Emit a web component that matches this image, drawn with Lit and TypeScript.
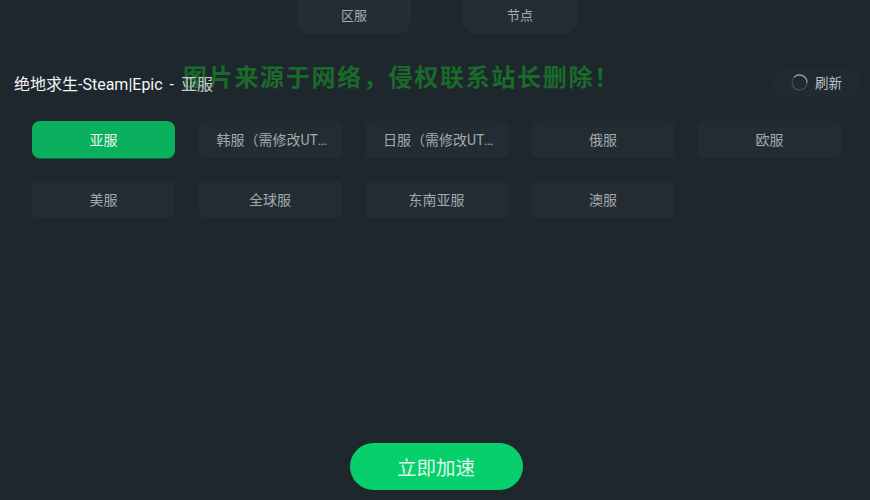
import { LitElement, html, css } from "lit";
import { customElement } from "lit/decorators.js";

const SERVERS = ["亚服", "韩服（需修改UTC时区）", "日服（需修改UTC时区）", "俄服", "欧服", "美服", "全球服", "东南亚服", "澳服"];

@customElement("app-root")
export class AppRoot extends LitElement {
  static styles = css`
    :host {
      display: block;
      width: 870px;
      height: 500px;
      overflow: hidden;
      font-family: Roboto, "Noto Sans CJK SC", sans-serif;
    }
    .page {
      position: relative;
      box-sizing: border-box;
      height: 500px;
      background: #1e272d;
      display: flex;
      flex-direction: column;
    }
    .tabs {
      display: flex;
      justify-content: center;
      gap: 52px;
      margin-left: 4px;
    }
    .tab {
      width: 114px;
      box-sizing: border-box;
      background: #252d34;
      border-radius: 0 0 14px 14px;
      color: #a9afb3;
      font-size: 13px;
      display: flex;
      align-items: center;
      justify-content: center;
      margin-top: -4px;
      height: 38px;
      padding-bottom: 2px;
    }
    .head {
      position: relative;
      z-index: 1;
      display: flex;
      align-items: center;
      justify-content: space-between;
      margin-top: 33px;
      padding: 0 10px 0 14px;
      height: 30px;
    }
    .title {
      color: #f2f4f5;
      font-size: 16px;
      line-height: 30px;
      margin-top: 6px;
      white-space: nowrap;
      word-spacing: 3px;
    }
    .title span {
      color: #c4c9cc;
    }
    .refresh {
      width: 87px;
      height: 29px;
      box-sizing: border-box;
      border-radius: 15px;
      background: #212a31;
      color: #bfc4c7;
      font-size: 13.5px;
      display: flex;
      align-items: center;
      gap: 7px;
      padding-left: 18px;
    }
    .refresh svg {
      display: block;
      flex: none;
    }
    .grid {
      display: grid;
      grid-template-columns: repeat(5, 143px);
      grid-auto-rows: 37px;
      column-gap: 23.5px;
      row-gap: 23px;
      margin: 24px 0 0 32px;
    }
    .srv {
      box-sizing: border-box;
      background: #242c33;
      border-radius: 5px;
      color: #a3a9ad;
      font-size: 14px;
      line-height: 38px;
      text-align: center;
      padding: 0 14px;
      white-space: nowrap;
      overflow: hidden;
      text-overflow: ellipsis;
    }
    .srv.long {
      padding: 0 14px 0 18px;
    }
    .srv.on {
      background: #0bb05e;
      border-radius: 8px;
      color: #e9f7ef;
      box-shadow: 0 1px 0 #0a6a3c;
    }
    .foot {
      margin-top: auto;
      padding: 0 0 10px 2px;
      display: flex;
      justify-content: center;
    }
    .go {
      width: 173px;
      height: 47px;
      border: 0;
      border-radius: 24px;
      background: #06cf6c;
      color: #dff7e9;
      font-family: inherit;
      font-size: 19.5px;
      padding: 0;
    }
    .mark {
      position: absolute;
      left: 183px;
      top: 59px;
      color: #1a6a2a;
      font-size: 24px;
      font-weight: 700;
      line-height: 34px;
      letter-spacing: 1.7px;
      white-space: nowrap;
      font-family: "Noto Sans CJK SC", sans-serif;
    }
  `;

  render() {
    return html`
      <div class="page">
        <div class="tabs">
          <div class="tab">区服</div>
          <div class="tab">节点</div>
        </div>
        <div class="head">
          <div class="title">绝地求生-Steam|Epic - <span>亚服</span></div>
          <div class="refresh">
            <svg width="17" height="17" viewBox="0 0 17 17" fill="none">
              <circle cx="8.5" cy="8.5" r="7.5" stroke="#4c5459" stroke-width="1.1"></circle>
              <path d="M3.2 3.2A7.5 7.5 0 0 1 16 8.5" stroke="#9aa0a4" stroke-width="1.2"></path>
            </svg>
            刷新
          </div>
        </div>
        <div class="grid">
          ${SERVERS.map((s, i) => html`<div class="srv ${i === 0 ? "on" : ""} ${s.length > 8 ? "long" : ""}">${s}</div>`)}
        </div>
        <div class="foot"><button class="go">立即加速</button></div>
        <div class="mark">图片来源于网络，侵权联系站长删除！</div>
      </div>
    `;
  }
}
